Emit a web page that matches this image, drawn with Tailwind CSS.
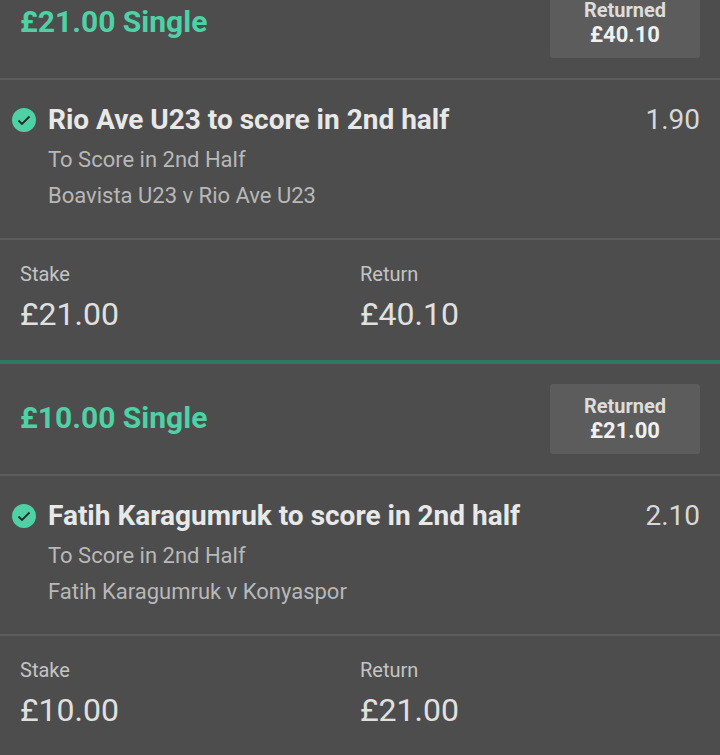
<!DOCTYPE html>
<html lang="en">
<head>
<meta charset="UTF-8">
<title>Settled bets</title>
<script src="https://cdn.jsdelivr.net/npm/@tailwindcss/browser@4"></script>
</head>
<body class="bg-[#4d4d4d] font-['Roboto',sans-serif] h-[755px] overflow-hidden">
<div class="-mt-[32px]">

  <section class="border-b-4 border-[#2f7a63]">
    <div class="h-[112px] px-5 flex items-center justify-between border-b-2 border-[#5c5c5c]">
      <div class="pb-[2px] text-[30px] leading-[36px] font-bold text-[#4fd1a5]">£21.00 Single</div>
      <div class="w-[150px] h-[70px] pt-[10px] rounded-[3px] bg-[#5c5c5c] flex flex-col items-center text-[20px] leading-[24px] font-bold"><span class="text-[#dcdcdc]">Returned</span><span class="mt-[1px] text-[22px] text-[#f0f0f0]">£40.10</span></div>
    </div>
    <div class="h-[160px] pl-3 pr-5 pt-[22px] border-b-2 border-[#5c5c5c]">
      <div class="flex items-center">
        <svg class="w-6 h-6 mr-3 shrink-0" viewBox="0 0 24 24"><circle cx="12" cy="12" r="12" fill="#4fd1a5"/><path d="M6.5 12.5l3.5 3.5 7.5-7.5" fill="none" stroke="#1f2a26" stroke-width="1.8"/></svg>
        <div class="text-[28px] leading-[36px] font-bold text-[#e8e8e8] grow">Rio Ave U23 to score in 2nd half</div>
        <div class="text-[28px] leading-[36px] text-[#d8d8d8]">1.90</div>
      </div>
      <div class="pl-9 mt-1 text-[22px] leading-[36px] text-[#b8b8b8]">
        <div>To Score in 2nd Half</div>
        <div>Boavista U23 v Rio Ave U23</div>
      </div>
    </div>
    <div class="h-[120px] px-5 pt-5 flex">
      <div class="w-[340px]"><div class="text-[20px] leading-[28px] text-[#c4c4c4]">Stake</div><div class="text-[32px] leading-[40px] mt-[6px] text-[#e0e0e0]">£21.00</div></div>
      <div><div class="text-[20px] leading-[28px] text-[#c4c4c4]">Return</div><div class="text-[32px] leading-[40px] mt-[6px] text-[#e0e0e0]">£40.10</div></div>
    </div>
  </section>

  <section>
    <div class="h-[112px] px-5 flex items-center justify-between border-b-2 border-[#5c5c5c]">
      <div class="pb-[2px] text-[30px] leading-[36px] font-bold text-[#4fd1a5]">£10.00 Single</div>
      <div class="w-[150px] h-[70px] pt-[10px] rounded-[3px] bg-[#5c5c5c] flex flex-col items-center text-[20px] leading-[24px] font-bold"><span class="text-[#dcdcdc]">Returned</span><span class="mt-[1px] text-[22px] text-[#f0f0f0]">£21.00</span></div>
    </div>
    <div class="h-[160px] pl-3 pr-5 pt-[22px] border-b-2 border-[#5c5c5c]">
      <div class="flex items-center">
        <svg class="w-6 h-6 mr-3 shrink-0" viewBox="0 0 24 24"><circle cx="12" cy="12" r="12" fill="#4fd1a5"/><path d="M6.5 12.5l3.5 3.5 7.5-7.5" fill="none" stroke="#1f2a26" stroke-width="1.8"/></svg>
        <div class="text-[28px] leading-[36px] font-bold text-[#e8e8e8] grow">Fatih Karagumruk to score in 2nd half</div>
        <div class="text-[28px] leading-[36px] text-[#d8d8d8]">2.10</div>
      </div>
      <div class="pl-9 mt-1 text-[22px] leading-[36px] text-[#b8b8b8]">
        <div>To Score in 2nd Half</div>
        <div>Fatih Karagumruk v Konyaspor</div>
      </div>
    </div>
    <div class="h-[120px] px-5 pt-5 flex">
      <div class="w-[340px]"><div class="text-[20px] leading-[28px] text-[#c4c4c4]">Stake</div><div class="text-[32px] leading-[40px] mt-[6px] text-[#e0e0e0]">£10.00</div></div>
      <div><div class="text-[20px] leading-[28px] text-[#c4c4c4]">Return</div><div class="text-[32px] leading-[40px] mt-[6px] text-[#e0e0e0]">£21.00</div></div>
    </div>
  </section>

</div>
</body>
</html>
